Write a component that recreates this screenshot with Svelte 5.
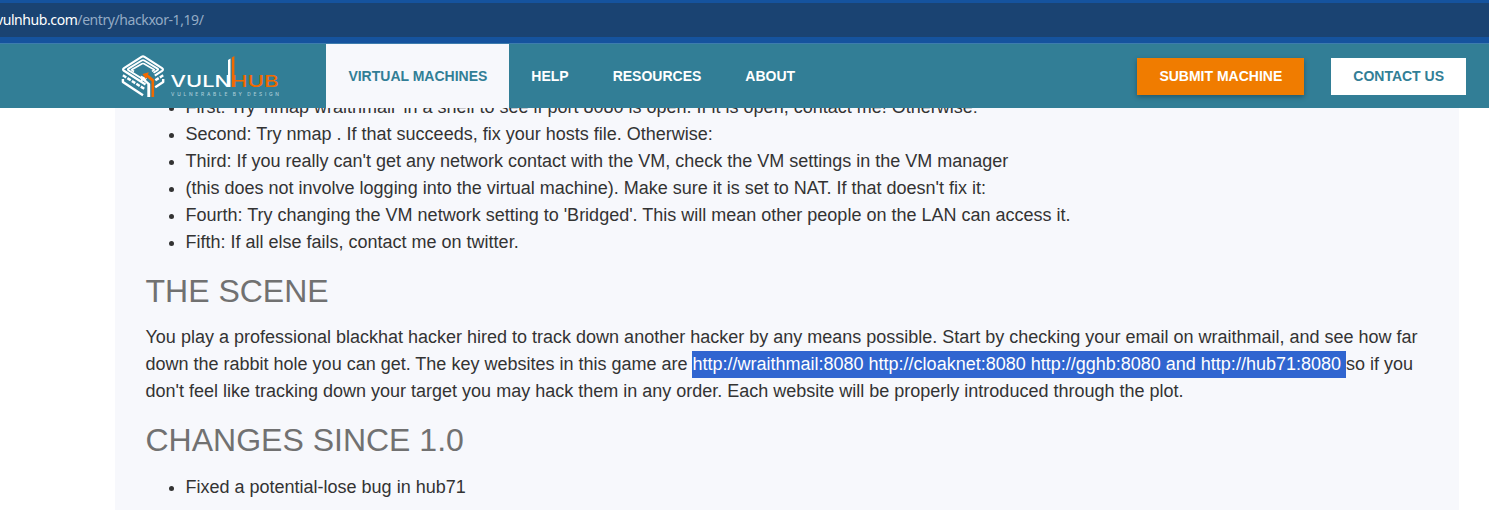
<script>
  const checks = [
    "First: Try 'nmap wraithmail' in a shell to see if port 8080 is open. If it is open, contact me! Otherwise:",
    'Second: Try nmap . If that succeeds, fix your hosts file. Otherwise:',
    "Third: If you really can't get any network contact with the VM, check the VM settings in the VM manager",
    "(this does not involve logging into the virtual machine). Make sure it is set to NAT. If that doesn't fix it:",
    "Fourth: Try changing the VM network setting to 'Bridged'. This will mean other people on the LAN can access it.",
    'Fifth: If all else fails, contact me on twitter.'
  ];
  const links = ['VIRTUAL MACHINES', 'HELP', 'RESOURCES', 'ABOUT'];
  const sites = 'http://wraithmail:8080 http://cloaknet:8080 http://gghb:8080 and http://hub71:8080 ';
</script>

<div class="window">
  <div class="urlbar"><div class="url"><b>vulnhub.com</b>/entry/hackxor-1,19/</div></div>
  <header>
    <svg class="logo" width="164" height="48" viewBox="118 53 164 48" fill="none">
      <g stroke="#fff" stroke-linejoin="round">
        <path d="M145.5 84.5L124 70.8Q122.2 69.5 124 68.2L141.5 56.9Q143 56 144.5 56.9L162 68.2Q163.8 69.5 162 70.8L154.8 75.7" stroke-width="2.2" />
        <path d="M145.5 80.8L128.5 70.2Q127.2 69.4 128.5 68.6L141.8 60.5Q143 59.8 144.2 60.5L157.5 68.6Q158.8 69.4 157.5 70.2L153.5 72.8" stroke-width="1.9" />
        <path d="M134 71.5L131.6 69.8L142 63.8Q143 63.2 144 63.8L154.3 69.8L152 71.3" stroke-width="1.6" />
        <path d="M122.9 75.3L145 89.3" stroke-width="2.5" stroke-dasharray="4 1.3" />
        <path d="M122.9 79V82L143 95.3" stroke-width="2.4" />
        <path d="M163.2 75.3L155 80.5" stroke-width="2.5" stroke-dasharray="4 1.3" />
        <path d="M163.2 79V82L155.2 87.2" stroke-width="2.4" />
      </g>
      <path d="M140.8 75.5V81.8L143.1 80.4L147.3 84.2V97H150.2V83.8L145.7 79.8L147.2 78.6Z" fill="#fff" />
      <path d="M142.5 74L148.8 72.2L148 74.6L154.1 79.5V97H151.5V81.2L147 77.3L145.8 79Z" fill="#f06a00" />
      <text class="word" x="170.5" y="87" fill="#fff" textLength="60.5" lengthAdjust="spacingAndGlyphs">VULN</text>
      <text class="word" x="230.8" y="87" fill="#f06a00" textLength="48" lengthAdjust="spacingAndGlyphs">HUB</text>
      <path d="M228 87V60L230.5 58.4V87Z" fill="#fff" />
      <path d="M231.8 87V57.5L234.4 56V87Z" fill="#f06a00" />
      <text class="tag" x="171" y="96.2" fill="#a9ccd7" textLength="108">VULNERABLE BY DESIGN</text>
    </svg>
    <nav>
      {#each links as link, i}
        <a class:active={i === 0}>{link}</a>
      {/each}
    </nav>
    <div class="actions">
      <button class="submit">SUBMIT MACHINE</button>
      <button>CONTACT US</button>
    </div>
  </header>
  <main>
    <ul>
      {#each checks as item}<li>{item}</li>{/each}
    </ul>
    <h2>THE SCENE</h2>
    <p>You play a professional blackhat hacker hired to track down another hacker by any means possible. Start by checking your email on wraithmail, and see how far down the rabbit hole you can get. The key websites in this game are <span class="selected">{sites}</span>so if you don't feel like tracking down your target you may hack them in any order. Each website will be properly introduced through the plot.</p>
    <h2>CHANGES SINCE 1.0</h2>
    <ul><li>Fixed a potential-lose bug in hub71</li></ul>
  </main>
</div>

<style>
  .window {
    height: 510px;
    overflow: hidden;
    display: flex;
    flex-direction: column;
    background: #fff;
    font-family: "Liberation Sans", Arial, sans-serif;
  }
  .urlbar {
    flex: none;
    box-sizing: border-box;
    height: 43px;
    padding: 3px 0 6px;
    background: #15539e;
  }
  .url {
    height: 34px;
    line-height: 34px;
    text-indent: -4px;
    background: #1a4372;
    color: #94abc5;
    font-family: "Noto Sans", sans-serif;
    font-size: 14px;
    letter-spacing: -.42px;
    white-space: nowrap;
  }
  .url b { font-weight: 400; color: #fff; }
  header {
    flex: none;
    position: relative;
    z-index: 1;
    display: flex;
    align-items: center;
    box-sizing: border-box;
    height: 65px;
    padding: 0 23px 0 118px;
    border-top: 1px solid #3d7cae;
    background: #327e96;
  }
  .logo { margin: 2px 44px 0 0; }
  .word { font: 500 16.5px Inter, sans-serif; stroke: currentColor; stroke-width: 0; }
  .tag { font: 500 4.8px Inter, sans-serif; word-spacing: -1.5px; }
  nav { display: flex; height: 64px; }
  nav a {
    padding: 0 21.6px 0 22.4px;
    line-height: 64px;
    font-size: 14px;
    font-weight: 700;
    color: #fff;
  }
  nav a.active { background: #f7f8fc; color: #327e96; }
  .actions { display: flex; gap: 27px; margin-left: auto; }
  button {
    height: 37px;
    padding: 0 22px;
    border: 0;
    background: #fff;
    color: #327e96;
    font: 700 14px "Liberation Sans", Arial, sans-serif;
  }
  .submit {
    background: #f07c00;
    color: #fff;
    box-shadow: 0 2px 5px rgba(0, 0, 0, .3);
  }
  main {
    flex: none;
    box-sizing: border-box;
    width: 1344px;
    height: 430px;
    margin: -14px 0 0 115px;
    padding: 0 30px 0 30.5px;
    background: #f7f8fc;
    color: #333;
    font-size: 18px;
    line-height: 27px;
  }
  ul { margin: 0; padding-left: 40px; }
  h2 {
    margin: 15px 0 13px;
    line-height: 40px;
    font-size: 32px;
    font-weight: 400;
    color: #717171;
  }
  p { margin: 0; }
  p + h2 { margin-bottom: 14px; }
  .selected {
    margin-left: -.6px;
    padding: 3px 0 4px .6px;
    background: #3065d0;
    color: #fff;
  }
</style>
